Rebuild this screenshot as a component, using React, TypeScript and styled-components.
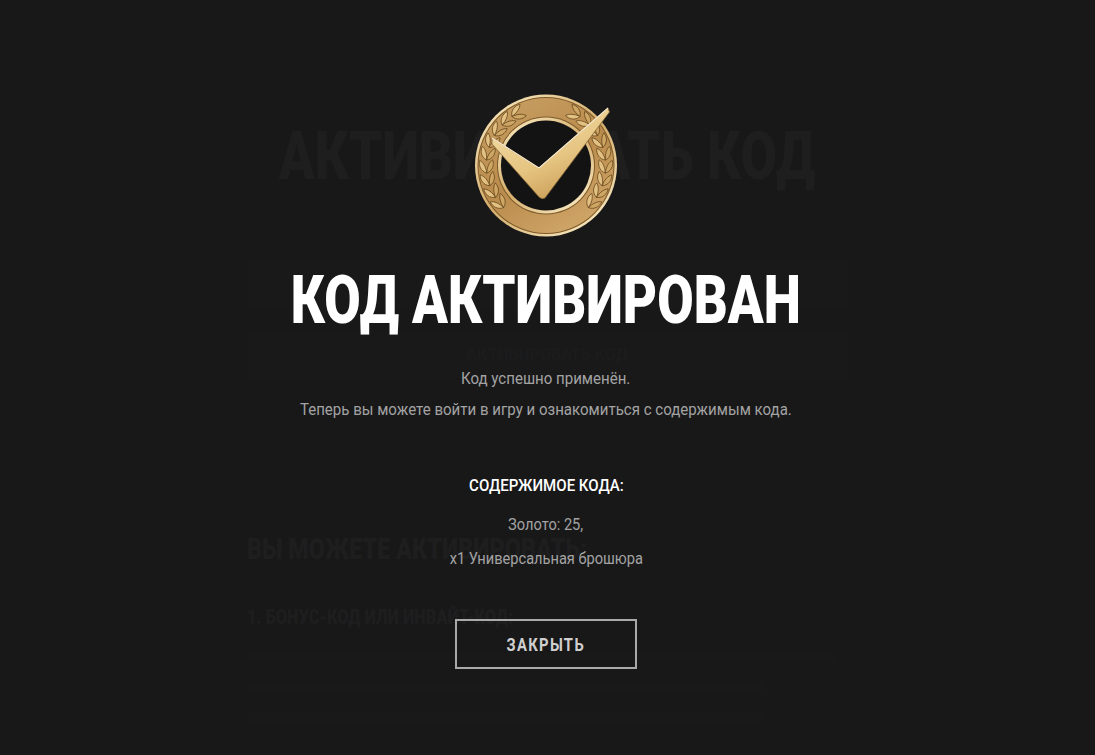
import React from "react";
import styled, { createGlobalStyle } from "styled-components";

const Global = createGlobalStyle`
  html, body { margin: 0; padding: 0; height: 100%; background: #181819; overflow: hidden; }
  #root { height: 100%; }
  * { box-sizing: border-box; }
`;

const Page = styled.div`
  position: relative;
  width: 100%;
  height: 755px;
  overflow: hidden;
  background: #181819;
  font-family: Roboto, "Noto Sans", sans-serif;
`;

const Under = styled.main`
  width: 600px;
  margin-left: 247px;
  padding-top: 117px;
  display: flex;
  flex-direction: column;
`;

const GhostTitle = styled.h1`
  margin: 0;
  display: flex;
  justify-content: center;
  font-size: 66px;
  line-height: 80px;
  font-weight: 900;
  color: #1e1e1f;
  white-space: nowrap;
  transform: scaleX(0.8);
`;

const GhostField = styled.div<{ $top: number }>`
  height: 48px;
  margin-top: ${(p) => p.$top}px;
  background: #19191a;
  display: flex;
  align-items: center;
  justify-content: center;
  font-size: 16px;
  font-weight: 500;
  color: #1c1c1d;
`;

const GhostHeading = styled.h2<{ $size: number; $top: number }>`
  margin: ${(p) => p.$top}px 0 0;
  font-size: ${(p) => p.$size}px;
  line-height: 30px;
  font-weight: 900;
  color: #1e1e1f;
  white-space: nowrap;
  transform: scaleX(0.78);
  transform-origin: left center;
`;

const GhostLine = styled.div<{ $w: number }>`
  width: ${(p) => p.$w}%;
  height: 9px;
  margin-top: 21px;
  background: #19191a;
`;

const Overlay = styled.section`
  position: absolute;
  inset: 0;
  padding: 85px 3px 0 0;
  display: flex;
  flex-direction: column;
  align-items: center;
  text-align: center;
`;

const Medal = styled.svg`
  display: block;
  width: 170px;
  height: 160px;
`;

const Title = styled.h1`
  margin: 16px 0 0;
  font-size: 66px;
  line-height: 80px;
  font-weight: 900;
  color: #fff;
  white-space: nowrap;
  transform: scaleX(0.8);
`;

const Body = styled.p<{ $top: number; $scale?: number }>`
  margin: ${(p) => p.$top}px 0 0;
  font-size: 17px;
  line-height: 24px;
  color: #a3a3a3;
  white-space: nowrap;
  transform: scaleX(${(p) => p.$scale ?? 0.885});
`;

const Sub = styled.h3`
  margin: 52px 0 0;
  font-size: 17px;
  line-height: 24px;
  font-weight: 500;
  color: #fff;
  white-space: nowrap;
  transform: scaleX(0.885);
`;

const Close = styled.button`
  margin-top: 49px;
  width: 182px;
  height: 50px;
  background: transparent;
  border: 2px solid #a9a9a9;
  border-radius: 0;
  padding: 0;
  font-family: inherit;
  font-size: 18px;
  font-weight: 700;
  letter-spacing: 1.6px;
  color: #cfcfcf;
`;

const CloseLabel = styled.span`
  display: inline-block;
  transform: scaleX(0.82);
`;

function leaves(cx: number, cy: number, side: 1 | -1) {
  const out: React.ReactNode[] = [];
  const n = 9;
  for (let i = 0; i < n; i++) {
    const deg = -40 + (i * 100) / (n - 1);
    const a = deg * (Math.PI / 180);
    const r = 59.5;
    const x = cx + side * Math.cos(a) * r;
    const y = cy - Math.sin(a) * r;
    const tang = side === 1 ? -deg : deg;
    out.push(
      <g key={i} transform={`translate(${x} ${y}) rotate(${tang})`}>
        <path d="M0 5 C-6 3 -8 -3 -6.5 -8 C-3 -6 -0.5 -1 0 5Z" fill="#e3c183" stroke="#5f4118" strokeWidth="0.7" />
        <path d="M0 5 C6 3 8 -3 6.5 -8 C3 -6 0.5 -1 0 5Z" fill="#cfa765" stroke="#5f4118" strokeWidth="0.7" />
      </g>
    );
  }
  return out;
}

const App: React.FC = () => (
  <Page>
    <Global />
    <Under aria-hidden="true">
      <GhostTitle>АКТИВИРОВАТЬ КОД</GhostTitle>
      <GhostField $top={65} />
      <GhostField $top={20}>АКТИВИРОВАТЬ КОД</GhostField>
      <GhostHeading $size={30} $top={156}>ВЫ МОЖЕТЕ АКТИВИРОВАТЬ:</GhostHeading>
      <GhostHeading $size={21} $top={38}>1. БОНУС-КОД ИЛИ ИНВАЙТ-КОД:</GhostHeading>
      <GhostLine $w={98} />
      <GhostLine $w={86} />
      <GhostLine $w={86} />
    </Under>
    <Overlay>
      <Medal viewBox="0 0 170 160" role="img" aria-label="Медаль">
        <defs>
          <linearGradient id="rim" x1="0.15" y1="0.05" x2="0.85" y2="0.95">
            <stop offset="0" stopColor="#f6e4b8" />
            <stop offset="0.5" stopColor="#d3ab69" />
            <stop offset="1" stopColor="#f9e9c2" />
          </linearGradient>
          <linearGradient id="face" x1="0.2" y1="0" x2="0.8" y2="1">
            <stop offset="0" stopColor="#c89e62" />
            <stop offset="0.5" stopColor="#b98b4c" />
            <stop offset="1" stopColor="#d2a86b" />
          </linearGradient>
          <linearGradient id="tick" x1="0.2" y1="0.1" x2="0.65" y2="1">
            <stop offset="0" stopColor="#f1d9a2" />
            <stop offset="0.55" stopColor="#e6c582" />
            <stop offset="1" stopColor="#c89c55" />
          </linearGradient>
        </defs>
        <circle cx="85" cy="80.5" r="71" fill="url(#rim)" />
        <circle cx="85" cy="80.5" r="68.5" fill="#7d5a28" />
        <circle cx="85" cy="80.5" r="67.5" fill="url(#face)" />
        {leaves(85, 80.5, -1)}
        {leaves(85, 80.5, 1)}
        <circle cx="85" cy="80.5" r="49" fill="#7d5a28" />
        <circle cx="85" cy="80.5" r="48" fill="url(#rim)" />
        <circle cx="85" cy="80.5" r="45" fill="#131314" />
        <path
          d="M31 53 L78 83 L147 23 L148.5 27 L84 113 Q81 115 78 112 L31 59 Z"
          fill="url(#tick)"
          stroke="#7f5f30"
          strokeWidth="0.8"
          strokeLinejoin="round"
        />
        <path d="M31 53 L78 83 L147 23" fill="none" stroke="#f9edd0" strokeWidth="1.1" strokeLinejoin="round" />
      </Medal>
      <Title>КОД АКТИВИРОВАН</Title>
      <Body $top={25}>Код успешно применён.</Body>
      <Body $top={7}>Теперь вы можете войти в игру и ознакомиться с содержимым кода.</Body>
      <Sub>СОДЕРЖИМОЕ КОДА:</Sub>
      <Body $top={15} $scale={0.86}>Золото: 25,</Body>
      <Body $top={10} $scale={0.86}>x1 Универсальная брошюра</Body>
      <Close>
        <CloseLabel>ЗАКРЫТЬ</CloseLabel>
      </Close>
    </Overlay>
  </Page>
);

export default App;
